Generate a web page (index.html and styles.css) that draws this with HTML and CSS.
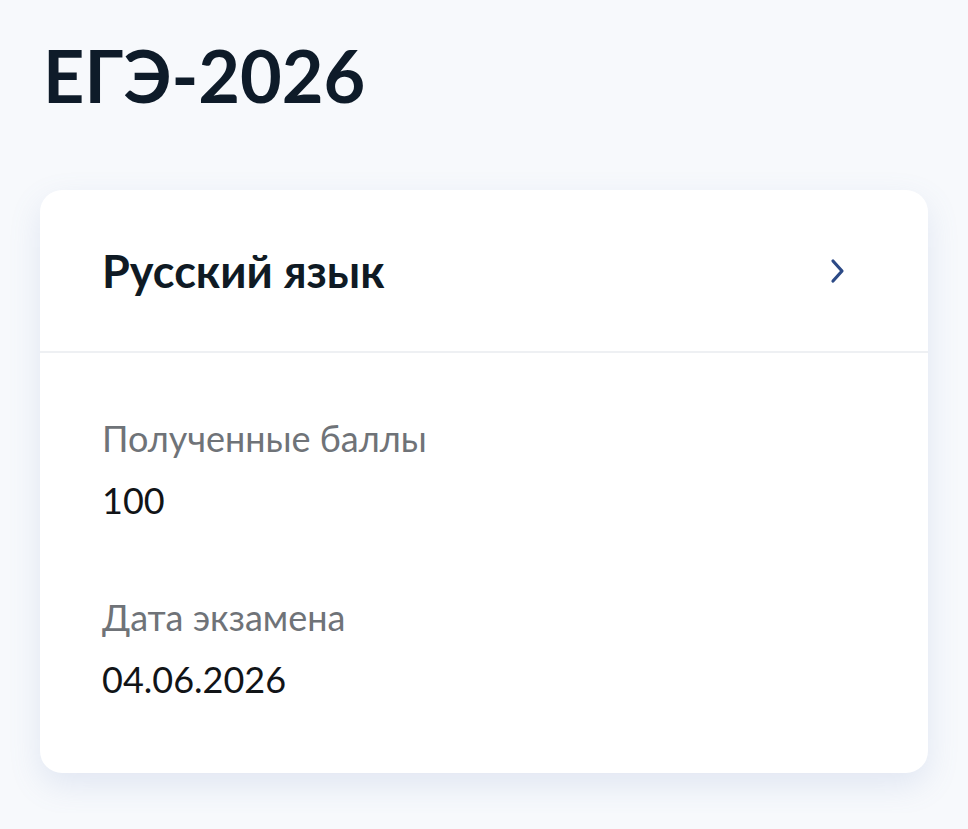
FILE: index.html
```html
<!DOCTYPE html>
<html lang="ru">

<head>
  <meta charset="UTF-8">
  <meta name="viewport" content="width=device-width, initial-scale=1.0">
  <title>ЕГЭ-2026</title>
  <link rel="stylesheet" href="styles.css">
</head>

<body>
  <div class="page">
    <h1 class="page-title">ЕГЭ-2026</h1>

    <div class="exam-card">
      <a class="exam-header" href="#">
        <span class="exam-subject">Русский язык</span>
        <svg class="chevron" width="20" height="28" viewBox="0 0 20 28" fill="none">
          <path d="M5 4 L14 14 L5 24" stroke="#2c4a86" stroke-width="3.2" stroke-linecap="round" stroke-linejoin="round" />
        </svg>
      </a>

      <div class="exam-body">
        <div class="field">
          <div class="field-label">Полученные баллы</div>
          <div class="field-value">100</div>
        </div>
        <div class="field">
          <div class="field-label">Дата экзамена</div>
          <div class="field-value">04.06.2026</div>
        </div>
      </div>
    </div>
  </div>
</body>

</html>
```

FILE: styles.css
```css
body {
  margin: 0;
  font-family: Lato, "Noto Sans", sans-serif;
  background-color: #f7f9fc;
  color: #0f1a24;
}

.page {
  padding: 27px 40px 40px;
}

.page-title {
  margin: 0 0 0 3px;
  font-size: 72px;
  font-weight: 700;
  line-height: 96px;
  color: #0e1b29;
}

.exam-card {
  margin-top: 67px;
  background: white;
  border-radius: 22px;
  box-shadow: 0 12px 32px rgba(110, 135, 190, 0.16);
}

.exam-header {
  display: flex;
  align-items: center;
  justify-content: space-between;
  height: 161px;
  padding: 0 80px 0 62px;
  border-bottom: 2px solid #eef0f3;
  text-decoration: none;
  color: #0f1a24;
}

.exam-subject {
  font-size: 45px;
  font-weight: 700;
}

.chevron {
  display: block;
}

.exam-body {
  padding: 63px 62px 72px;
}

.field {
  margin-bottom: 73px;
}

.field:last-child {
  margin-bottom: 0;
}

.field-label {
  font-size: 36px;
  line-height: 44px;
  color: #6f7378;
}

.field-value {
  margin-top: 18px;
  font-size: 36px;
  line-height: 44px;
  color: #111417;
}
```
